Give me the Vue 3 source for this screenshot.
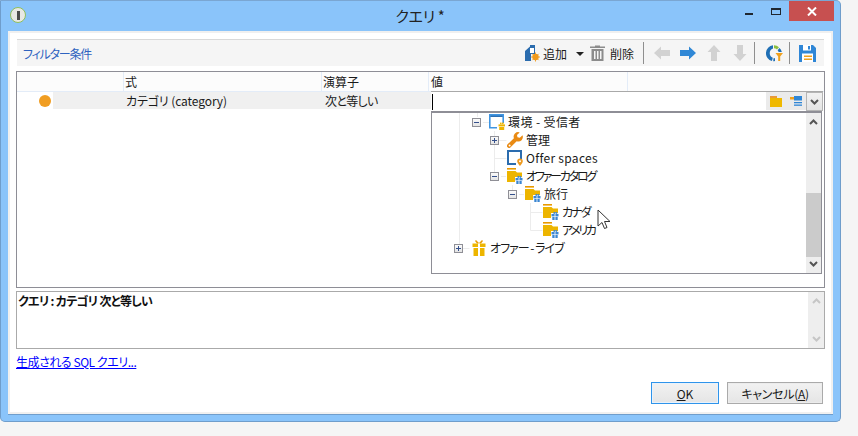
<script setup>
const toolbarNav = [
  { id: 'left', on: false },
  { id: 'right', on: true },
  { id: 'up', on: false },
  { id: 'down', on: false }
]
const columns = ['', '式', '演算子', '値', '']
const nodes = [
  { depth: 1, toggle: '−', icon: 'env', label: '環境 - 受信者', track: 0.4 },
  { depth: 2, toggle: '+', icon: 'wrench', label: '管理', track: 0 },
  { depth: 2, toggle: '', icon: 'space', label: 'Offer spaces', track: 0.3 },
  { depth: 2, toggle: '−', icon: 'fgift', label: 'オファーカタログ', track: -2.2 },
  { depth: 3, toggle: '−', icon: 'fgift', label: '旅行', track: 0 },
  { depth: 4, toggle: '', icon: 'fgift', label: 'カナダ', track: -2 },
  { depth: 4, toggle: '', icon: 'fgift', label: 'アメリカ', track: -2.4 },
  { depth: 0, toggle: '+', icon: 'gift', label: 'オファー - ライブ', track: -1 }
]
</script>

<template>
  <div class="page">
    <svg class="defs" width="0" height="0" aria-hidden="true">
      <defs>
        <symbol id="fgift" viewBox="0 0 16 16">
          <rect x="0" y="0" width="9" height="1.6" fill="#e99a00" />
          <path d="M0 3h8.500l1.500 1.500H15V14H0z" fill="#edb500" />
          <path d="M8 9h8v7H8z" fill="#fff" />
          <g fill="#3b86d2">
            <rect x="8.500" y="10" width="7" height="2.400" />
            <rect x="9.300" y="13" width="5.400" height="3" />
            <rect x="10.500" y="8" width="1.600" height="1.800" />
            <rect x="12.600" y="8" width="1.600" height="1.800" />
          </g>
          <path d="M11.600 10v6h.8v-6z" fill="#fff" />
        </symbol>
        <symbol id="env" viewBox="0 0 16 16">
          <path d="M0 0h15v9h-1.600V3H1.600v10H8v1.600H0z" fill="#3f95e2" />
          <rect x="1.600" y="1.600" width="11.800" height="1.400" fill="#2d6fb2" />
          <g fill="#edb500">
            <rect x="9.500" y="10.400" width="6.500" height="2" />
            <rect x="10.200" y="13" width="5" height="3" />
            <rect x="11" y="8.600" width="1.600" height="1.600" />
            <rect x="13" y="8.600" width="1.600" height="1.600" />
          </g>
        </symbol>
        <symbol id="space" viewBox="0 0 16 16">
          <path d="M0 0h15v9h-2V2H2v11h7v2H0z" fill="#2b6cae" />
          <path d="M13 8.500a2.800 2.800 0 0 1 2.800 2.800c0 1.800-2.800 4.700-2.800 4.700s-2.800-2.900-2.800-4.700A2.800 2.800 0 0 1 13 8.500z" fill="#ee9a1f" />
          <circle cx="13" cy="11.200" r="1" fill="#fff" />
        </symbol>
        <symbol id="wrench" viewBox="0 0 16 16">
          <path d="M15.500 3.200l-2.700 2.500-2.300-.5-.5-2.300L12.700.4A4.600 4.600 0 0 0 6.900 6.300L.6 12.300a2.100 2.100 0 0 0 3 3l6.100-6a4.600 4.600 0 0 0 5.800-6.100z" fill="#e98a12" />
          <circle cx="2.600" cy="13.400" r="1" fill="#fff" />
        </symbol>
        <symbol id="gift" viewBox="0 0 16 16">
          <path d="M5 0l3 3 3-3 1 1-2 2.500H6L4 1z" fill="#e99a00" />
          <rect x="1.500" y="3.500" width="13" height="3.500" fill="#edb500" />
          <rect x="2.500" y="8" width="11" height="8" fill="#edb500" />
          <rect x="7" y="3.500" width="2" height="12.500" fill="#fff" />
          <rect x="2.500" y="7" width="11" height="1" fill="#fff" />
        </symbol>
        <symbol id="left" viewBox="0 0 16 16">
          <path d="M0 8l7-6.500V5h9v6H7v3.500z" fill="currentColor" />
        </symbol>
        <symbol id="right" viewBox="0 0 16 16">
          <path d="M16 8L9 1.500V5H0v6h9v3.500z" fill="currentColor" />
        </symbol>
      </defs>
    </svg>

    <div class="window">
      <header class="titlebar">
        <span class="app-icon"><i></i></span>
        <span class="title">クエリ *</span>
        <div class="controls">
          <span class="ctl min"></span>
          <span class="ctl max"></span>
          <span class="close">
            <svg width="10" height="9" viewBox="0 0 10 9"><path d="M1 .5l8 8M9 .5l-8 8" stroke="#fff" stroke-width="2" /></svg>
          </span>
        </div>
      </header>

      <main class="client">
        <div class="filterbar">
          <span class="filter-title">フィルター条件</span>
          <div class="tools">
            <svg class="add-icon" width="16" height="17" viewBox="0 0 16 17">
              <path d="M1 6l5-4.500V0h5v9H7v7H1z" fill="#2b6cae" />
              <path d="M6 3h4v5H6z" fill="#fff" />
              <circle cx="11.500" cy="12" r="3.200" fill="#f09a1c" />
              <path d="M11.500 7.500v9M7 12h9M8.300 8.800l6.400 6.400M14.700 8.800l-6.400 6.400" stroke="#f09a1c" stroke-width=".9" />
            </svg>
            <span class="tool-label">追加</span>
            <span class="caret"></span>
            <svg class="trash" width="15" height="16" viewBox="0 0 15 16">
              <path d="M5 1.500V.5h5v1h5V3H0V1.500z" fill="#8c8c8c" />
              <path d="M1.500 4h12v12h-12zM4 6v8h1.500V6zm3 0v8h1.500V6zm3 0v8h1.500V6z" fill="#8c8c8c" fill-rule="evenodd" />
            </svg>
            <span class="tool-label del">削除</span>
            <span class="sep first"></span>
            <div class="nav">
              <svg
                v-for="b in toolbarNav"
                :key="b.id"
                class="nav-icon"
                :class="{ on: b.on }"
                width="16"
                height="16"
                viewBox="0 0 16 16"
              >
                <use :href="b.id === 'right' ? '#right' : '#left'" :transform="b.id === 'up' ? 'rotate(90 8 8)' : b.id === 'down' ? 'rotate(-90 8 8)' : ''" />
              </svg>
            </div>
            <span class="sep second"></span>
            <svg class="chart" width="17" height="17" viewBox="0 0 17 17">
              <path d="M7 .3A8 8 0 0 0 6 16l.8-3.200A5 5 0 0 1 7 3.500z" fill="#1f6fb5" />
              <path d="M8 .2a8 8 0 0 1 5 2l-2 2.300A5 5 0 0 0 8 3.300z" fill="#8bbf3f" />
              <path d="M13.500 3a8 8 0 0 1 2.300 4h-3.200a5 5 0 0 0-1-1.700z" fill="#1f6fb5" />
              <path d="M9 16v-3a5 5 0 0 1-1.500.200l-.3 3a8 8 0 0 0 1.800-.2z" fill="#1f6fb5" />
              <path d="M9.500 8H17l-2.800 3.500V16h-2v-4.500z" fill="#f0a01c" />
            </svg>
            <span class="sep third"></span>
            <svg class="save" width="17" height="17" viewBox="0 0 17 17">
              <path d="M0 0h14l3 3v14H0z" fill="#2f86d6" />
              <rect x="4" y="0" width="8" height="5.500" fill="#fff" />
              <rect x="9" y="1" width="2" height="3.500" fill="#2f86d6" />
              <rect x="3" y="8.500" width="11" height="8.500" fill="#fff" />
              <rect x="5" y="10.500" width="8" height="1.500" fill="#f0a01c" />
              <rect x="5" y="13.500" width="8" height="1.500" fill="#f0a01c" />
            </svg>
          </div>
        </div>

        <section class="grid-box">
          <div class="grid-head">
            <span v-for="(c, i) in columns" :key="i" class="head-cell">{{ c }}</span>
          </div>
          <div class="grid-row">
            <span class="dot-cell"><i class="dot"></i></span>
            <div class="row-fill">
              <span class="cell-expr">カテゴリ (category)</span>
              <span class="cell-op">次と等しい</span>
            </div>
            <div class="value-editor">
              <span class="caret-line"></span>
              <span class="editor-icons">
                <svg width="12" height="11" viewBox="0 0 12 11">
                  <rect width="7" height="2" fill="#e99a3a" />
                  <rect y="2" width="12" height="9" fill="#efb800" />
                </svg>
                <svg width="12" height="10" viewBox="0 0 12 10">
                  <rect x="4" y="0" width="8" height="4.500" fill="#2f86d6" />
                  <rect x="0" y="1" width="4" height="2.500" fill="#f0a01c" />
                  <rect x="4" y="6" width="8" height="1.300" fill="#2f86d6" />
                  <rect x="4" y="8.500" width="8" height="1.300" fill="#2f86d6" />
                </svg>
              </span>
              <button class="drop-btn" type="button">
                <svg width="9" height="6" viewBox="0 0 9 6"><path d="M1 1l3.500 3.500L8 1" fill="none" stroke="#555" stroke-width="2" /></svg>
              </button>
            </div>
          </div>

          <div class="dropdown">
            <div class="tree">
              <svg class="guides" width="374" height="160" viewBox="0 0 374 160">
                <g stroke="#ececec" fill="none">
                  <path d="M27.500 0V135.500M27.500 135.500h10" />
                  <path d="M45.500 0v4M51 9.500h6" />
                  <path d="M62.500 18V63.500M62.500 27.500h12M62.500 45.500h12M69 63.500h5" />
                  <path d="M80.500 72V81.500M87 81.500h5" />
                  <path d="M98.500 90V117.500M98.500 99.500h12M98.500 117.500h12" />
                </g>
              </svg>
              <div
                v-for="n in nodes"
                :key="n.label"
                class="node"
                :style="{ paddingLeft: n.depth * 18 + 'px' }"
              >
                <span class="toggle-slot">
                  <span v-if="n.toggle" class="toggle">
                    <i class="h"></i><i v-if="n.toggle === '+'" class="v"></i>
                  </span>
                </span>
                <svg class="node-icon" width="16" height="16"><use :href="'#' + n.icon" /></svg>
                <span class="node-label" :style="{ letterSpacing: n.track + 'px' }">{{ n.label }}</span>
              </div>
              <svg class="cursor" width="14" height="21" viewBox="0 0 14 21">
                <path d="M1 1v16l4-3.500 2.500 6 2.500-1-2.500-6H13z" fill="#fff" stroke="#333" stroke-width="1" />
              </svg>
            </div>
            <div class="scroll">
              <svg width="9" height="6" viewBox="0 0 9 6"><path d="M1 5l3.500-3.500L8 5" fill="none" stroke="#555" stroke-width="2" /></svg>
              <div class="track"><div class="thumb"></div></div>
              <svg width="9" height="6" viewBox="0 0 9 6"><path d="M1 1l3.500 3.500L8 1" fill="none" stroke="#555" stroke-width="2" /></svg>
            </div>
          </div>
        </section>

        <section class="desc">
          <p class="desc-text">クエリ : カテゴリ 次と等しい</p>
          <div class="desc-scroll">
            <svg width="9" height="6" viewBox="0 0 9 6"><path d="M1 5l3.500-3.500L8 5" fill="none" stroke="#c6c6c6" stroke-width="2" /></svg>
            <svg width="9" height="6" viewBox="0 0 9 6"><path d="M1 1l3.500 3.500L8 1" fill="none" stroke="#c6c6c6" stroke-width="2" /></svg>
          </div>
        </section>

        <a class="sql-link" href="#">生成される SQL クエリ...</a>

        <footer class="actions">
          <button class="btn ok" type="button"><u>O</u>K</button>
          <button class="btn cancel" type="button">キャンセル(<u>A</u>)</button>
        </footer>
      </main>
    </div>
  </div>
</template>

<style>
html, body { margin: 0; background: #f5f5f5; }
</style>

<style scoped>
.page {
  width: 858px;
  height: 436px;
  overflow: hidden;
  background: #f5f5f5;
  font-family: "Noto Sans CJK JP", "Open Sans", sans-serif;
  font-size: 12px;
  font-feature-settings: "palt";
  color: #1a1a1a;
}
.defs { position: absolute; }
.window {
  box-sizing: border-box;
  width: 841px;
  height: 422px;
  background: #8ac4fa;
  border: 1px solid #6f9dcb;
  border-top-color: #7aa6d2;
  border-radius: 0 5px 5px 5px;
  display: flex;
  flex-direction: column;
  padding: 0 7px 7px;
}
.titlebar {
  height: 30px;
  flex: none;
  position: relative;
  display: flex;
  justify-content: center;
  align-items: flex-start;
}
.title {
  font-size: 15px;
  line-height: 30px;
  letter-spacing: -0.3px;
  color: #222;
  padding-right: 1px;
}
.app-icon {
  position: absolute;
  left: 2px;
  top: 6px;
  width: 16px;
  height: 16px;
  box-sizing: border-box;
  border-radius: 50%;
  background: #e8e8e4;
  border: 1px solid #8fbf5c;
  display: flex;
  align-items: center;
  justify-content: center;
}
.app-icon i {
  width: 3px;
  height: 9px;
  background: #4a4a4a;
}
.controls {
  position: absolute;
  right: -1px;
  top: 0;
  display: flex;
  align-items: flex-start;
}
.ctl { display: block; box-sizing: border-box; }
.min {
  width: 8px;
  height: 2px;
  background: #1f2730;
  margin: 12px 18px 0 0;
}
.max {
  width: 10px;
  height: 7px;
  border: 1px solid #1f2730;
  border-top-width: 2px;
  margin: 7px 8px 0 0;
}
.close {
  width: 45px;
  height: 20px;
  background: #c75050;
  display: flex;
  align-items: center;
  justify-content: center;
}
.client {
  flex: 1;
  box-sizing: border-box;
  min-height: 0;
  background: #fff;
  border: 2px solid #f0f0f0;
  box-shadow: 0 1px 0 #6f9dcb;
  padding: 6px 6px 0;
  display: flex;
  flex-direction: column;
}
.filterbar {
  height: 27px;
  flex: none;
  box-sizing: border-box;
  margin: 0 1px;
  background: #f5f5f5;
  border-top: 1px solid #d9d9d9;
  display: flex;
  align-items: center;
  justify-content: space-between;
  padding-left: 6px;
}
.filter-title { color: #2f63c0; font-size: 12px; letter-spacing: -1.2px; }
.tools { display: flex; align-items: center; height: 100%; padding-right: 8px; }
.tool-label { font-size: 12px; margin-left: 3px; }
.caret {
  width: 0;
  height: 0;
  border: 4px solid transparent;
  border-top: 4px solid #222;
  border-bottom: 0;
  margin: 1px 6px 0 9px;
}
.tool-label.del { margin-left: 5px; }
.sep { width: 1px; height: 22px; background: #8f8f8f; }
.sep.first { margin-left: 9px; }
.sep.second { margin-left: 6px; }
.sep.third { margin: 0 9px 0 6px; }
.nav { display: flex; gap: 10px; margin-left: 10px; }
.nav-icon { color: #d2d2d2; }
.nav-icon.on { color: #3088d6; }
.chart { margin-left: 11px; }
.grid-box {
  position: relative;
  height: 217px;
  flex: none;
  margin-top: 5px;
  box-sizing: border-box;
  border: 1px solid #8e8e96;
  background: #fff;
}
.grid-head {
  height: 20px;
  box-sizing: border-box;
  background: #fcfcfc;
  border-bottom: 1px solid #e3ecf8;
  display: grid;
  grid-template-columns: 107px 198px 107px 199px 1fr;
}
.head-cell {
  line-height: 20px;
  border-right: 1px solid #e3ecf8;
  padding-left: 1px;
}
.head-cell:nth-child(4) { padding-left: 2px; }
.head-cell:nth-child(5) { border-right: 0; }
.grid-row {
  height: 19px;
  display: flex;
}
.dot-cell {
  width: 36px;
  display: flex;
  align-items: center;
  justify-content: flex-end;
  padding-bottom: 2px;
  box-sizing: border-box;
  padding-right: 2px;
}
.dot {
  display: block;
  width: 12px;
  height: 12px;
  border-radius: 50%;
  background: #f09d22;
}
.row-fill {
  width: 378px;
  height: 17px;
  background: #f0f0f0;
  display: flex;
  line-height: 18px;
}
.cell-expr { padding-left: 73px; width: 125px; letter-spacing: -0.1px; }
.cell-op { padding-left: 74px; letter-spacing: -0.7px; }
.value-editor {
  flex: none;
  width: 392px;
  height: 20px;
  margin-top: -1px;
  box-sizing: border-box;
  border-top: 1px solid #a9a9a9;
  display: flex;
  background: #fff;
  position: relative;
}
.caret-line { width: 1px; height: 16px; margin: 2px 0 0 1px; background: #000; }
.editor-icons {
  margin-left: auto;
  width: 40px;
  height: 18px;
  background: #ebebeb;
  display: flex;
  align-items: center;
  gap: 8px;
  padding-left: 4px;
  box-sizing: border-box;
}
.drop-btn {
  width: 17px;
  height: 19px;
  padding: 0;
  box-sizing: border-box;
  border: 1px solid #b5b5b5;
  background: linear-gradient(#f2f2f2, #e4e4e4);
  display: flex;
  align-items: center;
  justify-content: center;
}
.dropdown {
  position: absolute;
  left: 414px;
  top: 39px;
  width: 391px;
  height: 163px;
  box-sizing: border-box;
  border: 1px solid #8e8e96;
  border-top-width: 2px;
  background: #fff;
  display: flex;
}
.tree {
  flex: 1;
  position: relative;
  padding-left: 22px;
}
.guides { position: absolute; left: 0; top: 0; }
.node {
  height: 18px;
  display: flex;
  align-items: center;
  position: relative;
}
.toggle-slot {
  width: 16px;
  display: flex;
  justify-content: flex-start;
}
.toggle {
  width: 9px;
  height: 9px;
  box-sizing: border-box;
  border: 1px solid #8f8f96;
  background: linear-gradient(#fafafa, #e4e4e4);
  position: relative;
  display: block;
}
.toggle .h, .toggle .v { position: absolute; background: #34508c; display: block; }
.toggle .h { left: 1px; right: 1px; top: 3px; height: 1px; }
.toggle .v { top: 1px; bottom: 1px; left: 3px; width: 1px; }
.node-icon { flex: none; margin: 0 3px 0 1px; }
.node-label { line-height: 18px; white-space: nowrap; }
.cursor { position: absolute; left: 165px; top: 96px; }
.scroll {
  width: 15px;
  background: #eee;
  display: flex;
  flex-direction: column;
  align-items: center;
  padding: 6px 0;
  box-sizing: border-box;
  justify-content: space-between;
}
.track { flex: 1; width: 15px; position: relative; }
.thumb {
  position: absolute;
  left: 0;
  right: 0;
  bottom: 4px;
  height: 64px;
  background: #cbcbcb;
}
.desc {
  height: 58px;
  flex: none;
  margin-top: 3px;
  box-sizing: border-box;
  border: 1px solid #aaa;
  display: flex;
}
.desc-text {
  flex: 1;
  margin: 0;
  padding-left: 1px;
  font-weight: 700;
  line-height: 18px;
  letter-spacing: -0.7px;
  color: #111;
}
.desc-scroll {
  width: 16px;
  background: #eee;
  display: flex;
  flex-direction: column;
  align-items: center;
  justify-content: space-between;
  padding: 6px 0;
  box-sizing: border-box;
}
.sql-link {
  align-self: flex-start;
  margin-top: 4px;
  line-height: 18px;
  letter-spacing: -0.45px;
  color: #0000ff;
  text-decoration: underline;
}
.actions {
  display: flex;
  justify-content: flex-end;
  gap: 8px;
  margin-top: 11px;
  padding-right: 2px;
}
.btn {
  height: 22px;
  padding: 0;
  box-sizing: border-box;
  background: linear-gradient(#f2f2f2, #e5e5e5);
  font: inherit;
  color: #1a1a1a;
}
.ok { width: 68px; border: 1px solid #2f94ea; box-shadow: inset 0 0 0 1px #e8f2fc; }
.cancel { width: 96px; border: 1px solid #aaa; box-shadow: inset 0 0 0 1px #ececec; letter-spacing: -0.3px; }
</style>
